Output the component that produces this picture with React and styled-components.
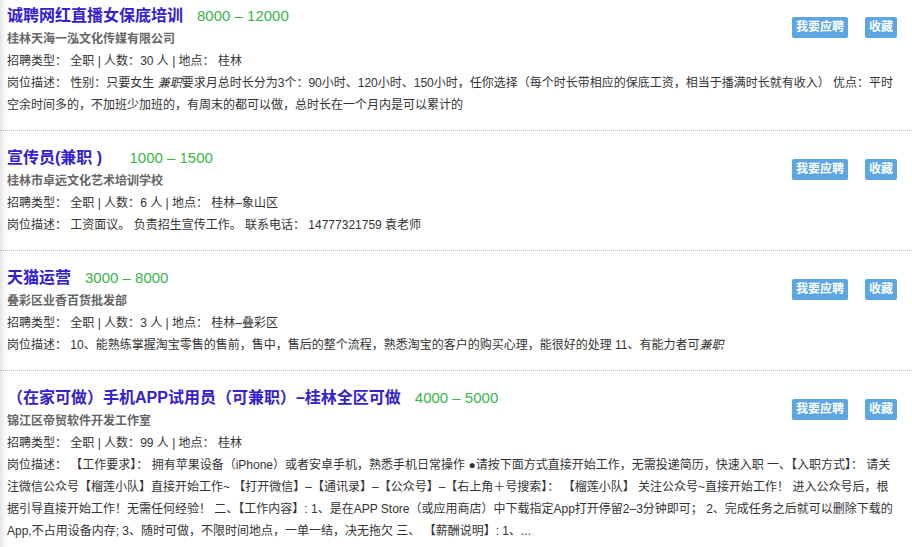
import React from "react";
import styled, { createGlobalStyle } from "styled-components";

const GlobalStyle = createGlobalStyle`
  html, body { margin: 0; padding: 0; background: #fff; }
  body {
    font-family: "Liberation Sans", "Noto Sans CJK SC", sans-serif;
    color: #333;
    font-size: 12px;
  }
`;

const Page = styled.div`
  width: 912px;
  height: 547px;
  overflow: hidden;
  background: linear-gradient(to right, #e4e4e4 0, #f6f6f6 4px, #fff 9px);
`;

const List = styled.div`
  margin-top: -11px;
`;

const Card = styled.div`
  padding: 14px 15px 14px 7px;
  border-bottom: 1px dotted #b5b5b5;
`;

const Actions = styled.div`
  float: right;
  display: flex;
  gap: 17px;
  margin-top: 14px;
`;

const Button = styled.button`
  height: 21px;
  padding: 0 4px;
  border: none;
  border-radius: 2px;
  background: #5ba6e3;
  color: #fff;
  font-family: "Liberation Sans", "Noto Sans CJK SC", sans-serif;
  font-size: 12px;
  font-weight: bold;
  line-height: 21px;
  cursor: pointer;
`;

const TitleRow = styled.div`
  display: flex;
  align-items: baseline;
  gap: 14px;
  line-height: 25px;
  height: 25px;
`;

const Title = styled.a`
  font-size: 16px;
  font-weight: bold;
  color: #3420d0;
  text-decoration: none;
  white-space: pre;
`;

const Salary = styled.span`
  font-size: 15px;
  color: #39b54a;
`;

const Company = styled.div`
  line-height: 22px;
  color: #666;
  font-weight: bold;
`;

const Line = styled.div`
  line-height: 22px;
  color: #333;
`;

const jobs = [
  {
    title: "诚聘网红直播女保底培训",
    salary: "8000 – 12000",
    company: "桂林天海一泓文化传媒有限公司",
    count: 30,
    place: "桂林",
    desc: (
      <>
        性别：只要女生 <em>兼职</em>要求月总时长分为3个：90小时、120小时、150小时，任你选择（每个时长带相应的保底工资，相当于播满时长就有收入） 优点：平时空余时间多的，不加班少加班的，有周末的都可以做，总时长在一个月内是可以累计的
      </>
    ),
  },
  {
    title: "宣传员(兼职 )   ",
    salary: "1000 – 1500",
    company: "桂林市卓远文化艺术培训学校",
    count: 6,
    place: "桂林–象山区",
    desc: <>工资面议。 负责招生宣传工作。 联系电话： 14777321759 袁老师</>,
  },
  {
    title: "天猫运营",
    salary: "3000 – 8000",
    company: "叠彩区业香百货批发部",
    count: 3,
    place: "桂林–叠彩区",
    desc: (
      <>
        10、能熟练掌握淘宝零售的售前，售中，售后的整个流程，熟悉淘宝的客户的购买心理，能很好的处理 11、有能力者可<em>兼职</em>
      </>
    ),
  },
  {
    title: "（在家可做）手机APP试用员（可兼职）–桂林全区可做",
    salary: "4000 – 5000",
    company: "锦江区帝贸软件开发工作室",
    count: 99,
    place: "桂林",
    desc: (
      <>
        【工作要求】： 拥有苹果设备（iPhone）或者安卓手机，熟悉手机日常操作 ●请按下面方式直接开始工作，无需投递简历，快速入职 一、【入职方式】： 请关注微信公众号【榴莲小队】直接开始工作~ 【打开微信】–【通讯录】–【公众号】–【右上角＋号搜索】： 【榴莲小队】 关注公众号~直接开始工作！ 进入公众号后，根据引导直接开始工作！无需任何经验！ 二、【工作内容】: 1、是在APP Store（或应用商店）中下载指定App打开停留2–3分钟即可； 2、完成任务之后就可以删除下载的App,不占用设备内存; 3、随时可做，不限时间地点，一单一结，决无拖欠 三、 【薪酬说明】: 1、...
      </>
    ),
  },
];

export default function App() {
  return (
    <>
      <GlobalStyle />
      <Page>
        <List>
          {jobs.map((job, i) => (
            <Card key={i}>
              <Actions>
                <Button>我要应聘</Button>
                <Button>收藏</Button>
              </Actions>
              <TitleRow>
                <Title href="#">{job.title}</Title>
                <Salary>{job.salary}</Salary>
              </TitleRow>
              <Company>{job.company}</Company>
              <Line>
                招聘类型：&nbsp;全职 | 人数：{job.count} 人 | 地点：&nbsp;{job.place}
              </Line>
              <Line>岗位描述：&nbsp;{job.desc}</Line>
            </Card>
          ))}
        </List>
      </Page>
    </>
  );
}
